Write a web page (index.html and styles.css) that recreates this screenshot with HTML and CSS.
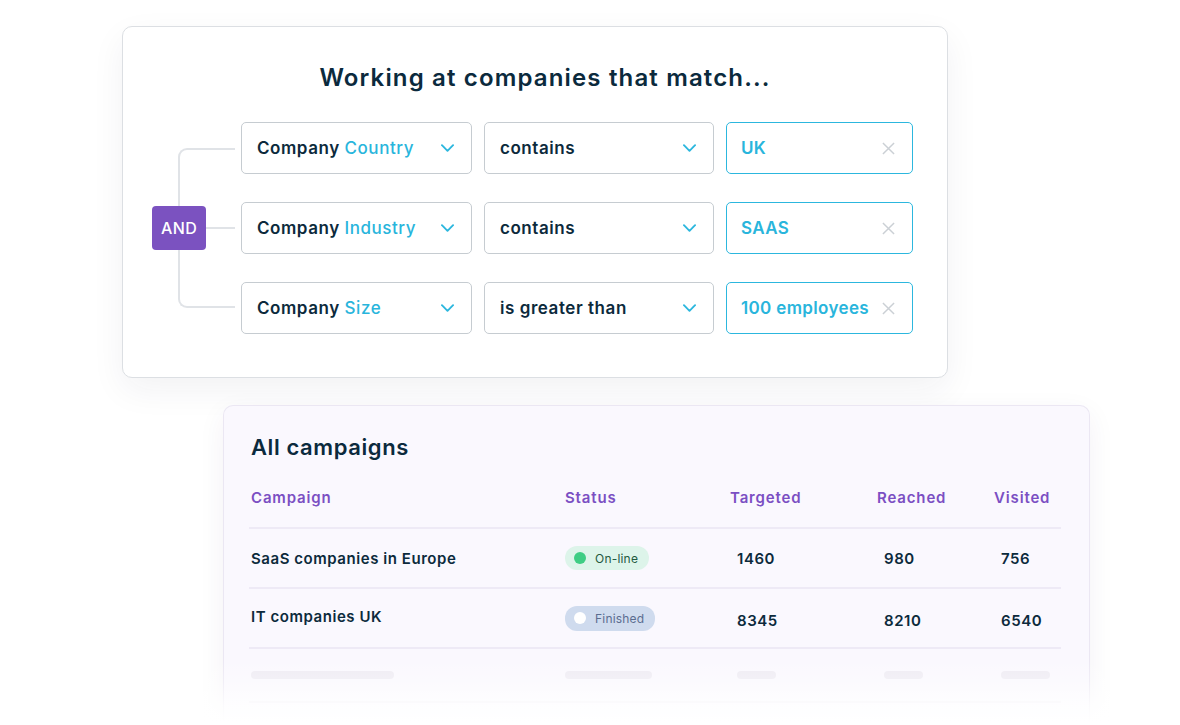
FILE: index.html
```html
<!DOCTYPE html>
<html lang="en">
<head>
<meta charset="utf-8">
<title>Company filters and campaigns</title>
<link rel="stylesheet" href="styles.css">
</head>
<body>
<div class="stage">
  <section class="filter-card">
    <h1 class="filter-title">Working at companies that match...</h1>
    <div class="builder">
      <div class="logic">
        <div class="bracket"></div>
        <div class="and-badge">AND</div>
      </div>
      <div class="rows">
        <div class="select"><span>Company <em>Country</em></span><svg class="chev" viewBox="0 0 14 8"><path d="M1 1l6 6 6-6"/></svg></div>
        <div class="select"><span>contains</span><svg class="chev" viewBox="0 0 14 8"><path d="M1 1l6 6 6-6"/></svg></div>
        <div class="value"><span>UK</span><svg class="clear" viewBox="0 0 14 14"><path d="M1 1l12 12M13 1L1 13"/></svg></div>

        <div class="select"><span>Company <em>Industry</em></span><svg class="chev" viewBox="0 0 14 8"><path d="M1 1l6 6 6-6"/></svg></div>
        <div class="select"><span>contains</span><svg class="chev" viewBox="0 0 14 8"><path d="M1 1l6 6 6-6"/></svg></div>
        <div class="value"><span>SAAS</span><svg class="clear" viewBox="0 0 14 14"><path d="M1 1l12 12M13 1L1 13"/></svg></div>

        <div class="select"><span>Company <em>Size</em></span><svg class="chev" viewBox="0 0 14 8"><path d="M1 1l6 6 6-6"/></svg></div>
        <div class="select"><span>is greater than</span><svg class="chev" viewBox="0 0 14 8"><path d="M1 1l6 6 6-6"/></svg></div>
        <div class="value"><span>100 employees</span><svg class="clear" viewBox="0 0 14 14"><path d="M1 1l12 12M13 1L1 13"/></svg></div>
      </div>
    </div>
  </section>

  <section class="campaigns-card">
    <h2 class="campaigns-title">All campaigns</h2>
    <div class="table">
      <div class="tr th">
        <div class="c-name">Campaign</div>
        <div class="c-status">Status</div>
        <div class="c-num">Targeted</div>
        <div class="c-num">Reached</div>
        <div class="c-num">Visited</div>
      </div>
      <div class="tr">
        <div class="c-name">SaaS companies in Europe</div>
        <div class="c-status"><span class="pill online"><i></i>On-line</span></div>
        <div class="c-num val">1460</div>
        <div class="c-num val">980</div>
        <div class="c-num val">756</div>
      </div>
      <div class="tr second">
        <div class="c-name">IT companies UK</div>
        <div class="c-status"><span class="pill finished"><i></i>Finished</span></div>
        <div class="c-num val low">8345</div>
        <div class="c-num val low">8210</div>
        <div class="c-num val low">6540</div>
      </div>
      <div class="tr skeleton">
        <div class="c-name"><span class="bar w143"></span></div>
        <div class="c-status"><span class="bar w87"></span></div>
        <div class="c-num val"><span class="bar w39"></span></div>
        <div class="c-num val"><span class="bar w39"></span></div>
        <div class="c-num val"><span class="bar w49"></span></div>
      </div>
    </div>
    <div class="fade"></div>
  </section>
</div>
</body>
</html>
```

FILE: styles.css
```css
* { box-sizing: border-box; }
html, body { margin: 0; padding: 0; }
body {
  width: 1180px;
  height: 725px;
  overflow: hidden;
  background: #ffffff;
  font-family: "Inter", "Open Sans", sans-serif;
  color: #0c2a3c;
}
.stage {
  height: 725px;
  overflow: hidden;
  padding: 26px 0 0 122px;
}

/* ---------- filter card ---------- */
.filter-card {
  width: 826px;
  height: 352px;
  background: #fff;
  border: 1px solid #dcdfe3;
  border-radius: 10px;
  box-shadow: 0 12px 34px rgba(30, 40, 60, 0.06);
  padding: 35px 0 0 29px;
}
.filter-title {
  margin: 0;
  text-align: center;
  width: 786px;
  font-size: 24px;
  line-height: 32px;
  font-weight: 600;
  letter-spacing: 1.15px;
  color: #0b2a3d;
}
.builder {
  display: flex;
  margin-top: 28px;
}
.logic {
  position: relative;
  width: 89px;
  display: flex;
  align-items: center;
}
.bracket {
  position: absolute;
  left: 26px;
  right: 6px;
  top: 26px;
  bottom: 26px;
  border: 2px solid #e0e3e7;
  border-right: none;
  border-radius: 9px 0 0 9px;
}
.logic::after {
  content: "";
  position: absolute;
  left: 54px;
  right: 6px;
  top: 50%;
  height: 2px;
  margin-top: -1px;
  background: #e0e3e7;
}
.and-badge {
  position: relative;
  z-index: 1;
  width: 54px;
  height: 44px;
  border-radius: 4px;
  background: #7b52c0;
  color: #fff;
  font-size: 16px;
  font-weight: 500;
  letter-spacing: 0.4px;
  display: flex;
  align-items: center;
  justify-content: center;
}
.rows {
  display: grid;
  grid-template-columns: 231px 230px 187px;
  column-gap: 12px;
  row-gap: 28px;
}
.select, .value {
  height: 52px;
  border-radius: 5px;
  display: flex;
  align-items: center;
  justify-content: space-between;
  padding: 0 17px 0 15px;
  font-size: 17px;
  font-weight: 600;
  letter-spacing: 0.55px;
}
.select {
  border: 1.5px solid #c6ccd1;
  color: #0c2a3c;
}
.select em {
  font-style: normal;
  font-weight: 500;
  color: #29b5dc;
}
.value {
  border: 1.5px solid #2cb7de;
  color: #29b5dc;
  padding-right: 17px;
  padding-left: 14px;
  letter-spacing: 0.35px;
}
.chev {
  width: 13px;
  height: 8px;
  flex: none;
  fill: none;
  stroke: #2cb7de;
  stroke-width: 2;
  stroke-linecap: round;
  stroke-linejoin: round;
}
.clear {
  width: 13px;
  height: 13px;
  flex: none;
  fill: none;
  stroke: #cbd0d5;
  stroke-width: 1.6;
}

/* ---------- campaigns card ---------- */
.campaigns-card {
  position: relative;
  margin: 27px 0 0 101px;
  width: 867px;
  height: 321px;
  background: #faf8fe;
  border: 1px solid #ebe7f3;
  border-bottom: none;
  border-radius: 10px 10px 0 0;
  box-shadow: 0 8px 28px rgba(60, 40, 100, 0.06);
  padding: 26px 28px 0 25px;
}
.campaigns-title {
  margin: 0 0 0 2px;
  font-size: 22px;
  line-height: 30px;
  font-weight: 600;
  letter-spacing: 0.6px;
  color: #0b2a3d;
}
.table {
  width: 812px;
  margin-top: 26px;
}
.tr {
  display: grid;
  grid-template-columns: 314px 165px 147px 117px 69px;
  align-items: center;
  height: 60px;
  border-bottom: 2px solid #eeeaf6;
  font-size: 15px;
  font-weight: 600;
  letter-spacing: 0.55px;
  color: #0c2a3c;
}
.tr > div { padding-left: 2px; }
.tr.th {
  height: 41px;
  align-items: start;
  color: #7b4fc3;
  line-height: 20px;
  letter-spacing: 0.85px;
}
.tr .val { padding-left: 9px; }
.tr.second .low { padding-top: 5px; }
.tr.second .c-name { padding-bottom: 3px; }
.tr.skeleton { height: 54px; border-bottom-color: #f1eef6; }
.pill {
  display: inline-flex;
  align-items: center;
  height: 24px;
  border-radius: 12px;
  padding: 0 11px 0 9px;
  font-size: 12px;
  font-weight: 400;
  letter-spacing: 0.2px;
}
.pill i {
  display: block;
  width: 12px;
  height: 12px;
  border-radius: 50%;
  margin-right: 9px;
}
.pill.online { background: #ddf4ea; color: #1f5a3f; }
.pill.online i { background: #3ecd84; }
.pill.finished { background: #cfdbee; color: #5b6d90; height: 25px; }
.pill.finished i { background: #fff; }
.bar {
  display: block;
  height: 8px;
  border-radius: 4px;
  background: #eeebf3;
}
.w143 { width: 143px; }
.w87 { width: 87px; }
.w39 { width: 39px; }
.w49 { width: 49px; }
.fade {
  position: absolute;
  left: -40px;
  right: -40px;
  top: 252px;
  bottom: 0;
  background: linear-gradient(to bottom, rgba(255,255,255,0) 0%, rgba(255,255,255,0.3) 35%, rgba(255,255,255,0.8) 70%, #fff 95%);
}
```
